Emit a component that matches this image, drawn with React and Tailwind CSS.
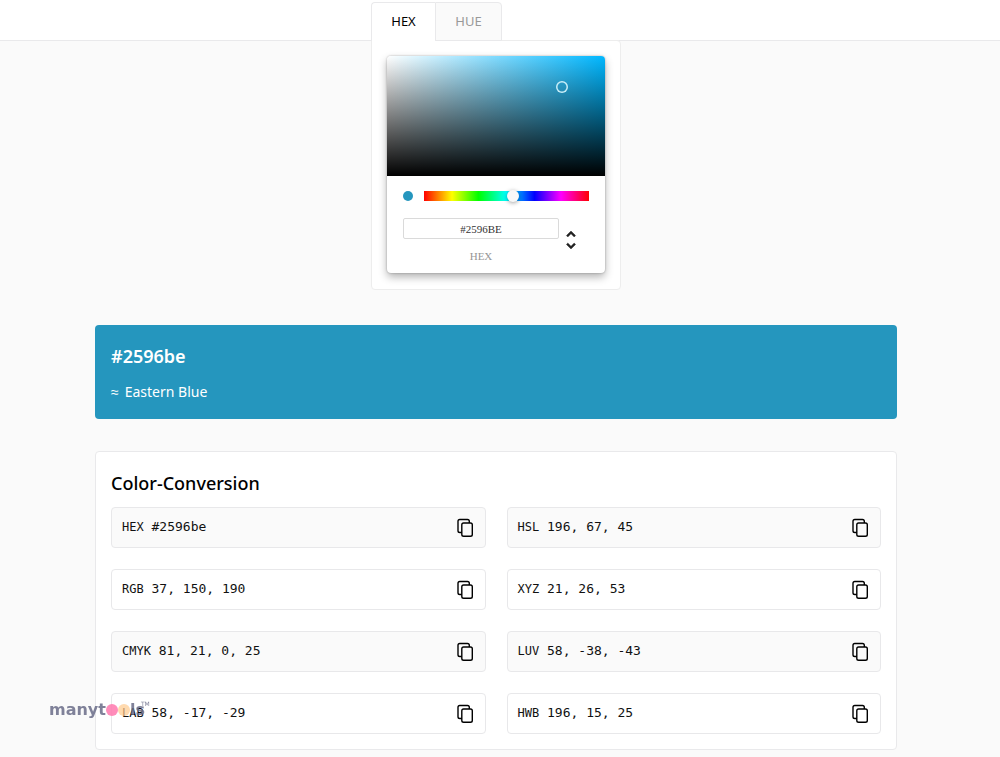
import React from "react";

const conversions = [
  { name: "HEX", value: "#2596be" },
  { name: "HSL", value: "196, 67, 45" },
  { name: "RGB", value: "37, 150, 190" },
  { name: "XYZ", value: "21, 26, 53" },
  { name: "CMYK", value: "81, 21, 0, 25" },
  { name: "LUV", value: "58, -38, -43" },
  { name: "LAB", value: "58, -17, -29" },
  { name: "HWB", value: "196, 15, 25" },
];

function CopyIcon() {
  return (
    <svg className="size-6" viewBox="0 0 24 24" fill="none" stroke="currentColor" strokeWidth="1.4" aria-hidden="true">
      <rect x="8.800" y="7" width="10.500" height="13.200" rx="1.800" />
      <path d="M16.300 7V5.300a1.800 1.800 0 0 0-1.800-1.800H6.800A1.800 1.800 0 0 0 5 5.300v9.400a1.800 1.800 0 0 0 1.800 1.800h2" />
    </svg>
  );
}

function Tabs() {
  return (
    <header className="border-b border-[#e9e9eb] bg-white pr-2 pt-0.5">
      <div role="tablist" aria-label="Picker mode" className="relative z-10 mx-auto -mb-px flex w-full max-w-[250px] text-[13px] leading-5">
        <button role="tab" aria-selected="true" className="h-[39px] w-16 rounded-tl border-l border-t border-[#e9e9eb] bg-white pb-0.5 text-black">
          HEX
        </button>
        <button role="tab" aria-selected="false" className="h-[39px] w-[67px] rounded-tr border border-[#e9e9eb] bg-[#fafafa] pb-0.5 text-[#999]">
          HUE
        </button>
      </div>
    </header>
  );
}

function Picker() {
  return (
    <section aria-label="Color picker" className="mx-auto -mt-px w-full max-w-[250px] rounded-b rounded-tr border border-[#ededed] bg-white px-[15px] pb-4 pt-[15px]">
      <div className="rounded-sm bg-white shadow-[0_0_2px_rgba(0,0,0,0.3),0_4px_8px_rgba(0,0,0,0.3)]">
        <div className="relative h-[120px] rounded-t-sm bg-[linear-gradient(to_top,#000,transparent),linear-gradient(to_right,#fff,#00b7ff)]">
          <span className="absolute left-[169px] top-[25px] size-3 rounded-full shadow-[inset_0_0_0_1.5px_#c8eef8]" />
        </div>
        <div className="px-4 pb-[9px] pt-[15px]">
          <div className="flex items-center gap-[11px]">
            <span className="size-2.5 rounded-full bg-[#2596be]" />
            <div className="relative h-2.5 flex-1 bg-[linear-gradient(to_right,#f00,#ff0_17%,#0f0_33%,#0ff_50%,#00f_67%,#f0f_83%,#f00)]">
              <span className="absolute -top-px left-[83px] size-3 rounded-full bg-[#f8f8f8] shadow-[0_1px_4px_rgba(0,0,0,0.37)]" />
            </div>
          </div>
          <div className="flex pt-[17px]">
            <div className="flex w-[156px] flex-col items-center font-['Liberation_Serif',serif] text-[11px]">
              <input
                id="hex"
                defaultValue="#2596BE"
                className="h-[21px] w-full rounded-xs border border-[#dadada] bg-white text-center text-[#333]"
              />
              <label htmlFor="hex" className="pt-[9px] leading-4 text-[#969696]">HEX</label>
            </div>
            <button aria-label="Change format" className="mt-2.5 size-6 text-[#222]">
              <svg className="size-6" viewBox="0 0 24 24" fill="currentColor" stroke="currentColor" strokeWidth="0.400" aria-hidden="true">
                <path d="M12 5.830 15.170 9l1.410-1.410L12 3 7.410 7.590 8.830 9 12 5.830Z" />
                <path d="M12 18.170 8.830 15 7.420 16.410 12 21l4.590-4.590L15.170 15 12 18.170Z" />
              </svg>
            </button>
          </div>
        </div>
      </div>
    </section>
  );
}

function Conversion({ name, value, shaded }) {
  return (
    <li className={`flex h-[41px] items-center justify-between rounded border border-[#e8e8ea] pl-2.5 pr-2 ${shaded ? "bg-[#fafafa]" : "bg-white"}`}>
      <code className="pb-0.5 font-['DejaVu_Sans_Mono',monospace] text-[13px] leading-5 text-[#111]">
        <span className="text-xs">{name}</span> {value}
      </code>
      <button aria-label={`Copy ${name}`} className="text-black">
        <CopyIcon />
      </button>
    </li>
  );
}

function Watermark() {
  return (
    <div className="fixed bottom-[35px] left-[49px] flex items-center font-['DejaVu_Sans',sans-serif] text-base font-bold leading-6 text-[#696b87]/85">
      <span>manyt</span>
      <span className="size-3 rounded-full bg-[#ff78ae]/85" />
      <span className="size-3 rounded-full bg-[#ffc98c]/70" />
      <span>ls</span>
      <span className="-ml-1 self-start text-[6px] font-normal leading-3">TM</span>
    </div>
  );
}

export default function App() {
  return (
    <div className="min-h-screen bg-[#fafafa] pb-[7px] font-['Noto_Sans',sans-serif] text-black">
      <Tabs />
      <main className="pr-2">
        <Picker />
        <div className="mx-auto max-w-[802px]">
          <section className="mt-[35px] rounded bg-[#2596be] px-4 py-[15px] text-white">
            <h1 className="text-lg font-semibold leading-8">#2596be</h1>
            <p className="flex gap-1.5 pt-2 text-sm leading-6">
              <span>≈</span>
              <span>Eastern Blue</span>
            </p>
          </section>
          <section className="mt-8 rounded border border-[#e9e9eb] bg-white p-[15px]">
            <h2 className="mb-2 text-lg font-medium leading-8">Color-Conversion</h2>
            <ul className="grid grid-cols-2 gap-[21px]">
              {conversions.map((c, i) => (
                <Conversion key={c.name} {...c} shaded={i % 4 < 2} />
              ))}
            </ul>
          </section>
        </div>
      </main>
      <Watermark />
    </div>
  );
}
